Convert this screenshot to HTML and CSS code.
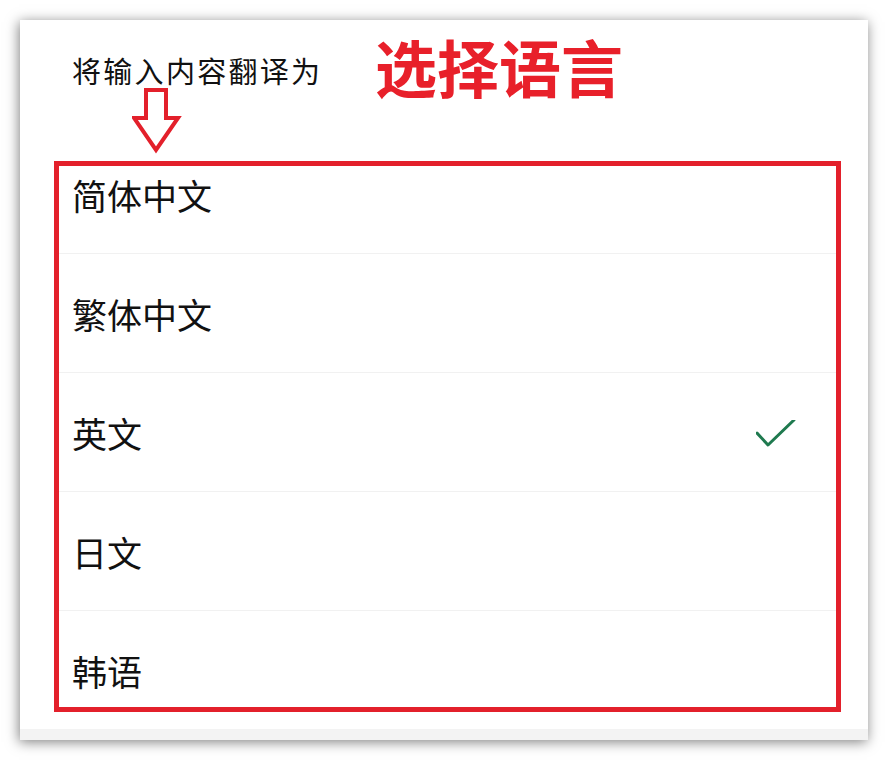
FILE: index.html
```html
<!DOCTYPE html>
<html lang="zh-CN">
<head>
<meta charset="utf-8">
<title>选择语言</title>
<link rel="stylesheet" href="styles.css">
</head>
<body>
<div class="card">
  <div class="header">
    <div class="prompt">将输入内容翻译为</div>
  </div>
  <ul class="list">
    <li class="row">简体中文</li>
    <li class="row">繁体中文</li>
    <li class="row selected">英文
      <svg class="check" width="40" height="30" viewBox="0 0 40 30"><polyline points="1,13 12,25 38,0" fill="none" stroke="#1f7a4f" stroke-width="3" stroke-linecap="round" stroke-linejoin="round"/></svg>
    </li>
    <li class="row">日文</li>
    <li class="row">韩语</li>
  </ul>
  <div class="footer"></div>

  <div class="note-title">选择语言</div>
  <svg class="note-arrow" width="56" height="66" viewBox="0 0 56 66"><polygon points="14,2 34,2 34,30 46,30 24,62 2,30 14,30" fill="#fff" stroke="#e3202b" stroke-width="4" stroke-linejoin="miter"/></svg>
  <div class="note-box"></div>
</div>
</body>
</html>
```

FILE: styles.css
```css
html, body {
  margin: 0;
  padding: 0;
  background: #ffffff;
}
body {
  font-family: "Noto Sans CJK SC", "Noto Sans", sans-serif;
  color: #111;
}
.card {
  position: relative;
  margin: 20px 21px 20px 20px;
  width: 848px;
  height: 720px;
  background: #fff;
  box-shadow: -1px 2px 12px rgba(0, 0, 0, 0.5);
  display: flex;
  flex-direction: column;
}
.header {
  height: 115px;
  box-sizing: border-box;
  padding: 36px 0 0 52px;
}
.prompt {
  font-size: 29px;
  line-height: 1;
  letter-spacing: 2.3px;
}
.list {
  list-style: none;
  margin: 0 30px 0 38px;
  padding: 0;
}
.row {
  height: 118px;
  box-sizing: content-box;
  display: flex;
  align-items: center;
  justify-content: space-between;
  padding: 0 42px 0 14px;
  font-size: 35px;
  line-height: 1;
  border-bottom: 1px solid #f1f1f1;
}
.row:last-child {
  border-bottom: none;
}
.check {
  display: block;
  margin-top: 5px;
}
.footer {
  flex: 1;
  background: #f3f3f3;
}
.note-title {
  position: absolute;
  left: 355px;
  top: 15px;
  font-size: 62px;
  line-height: 1;
  font-weight: 700;
  color: #e8202a;
}
.note-arrow {
  position: absolute;
  left: 112px;
  top: 68px;
}
.note-box {
  position: absolute;
  left: 34px;
  top: 141px;
  width: 777px;
  height: 541px;
  border: 5px solid #e3202b;
}
```
